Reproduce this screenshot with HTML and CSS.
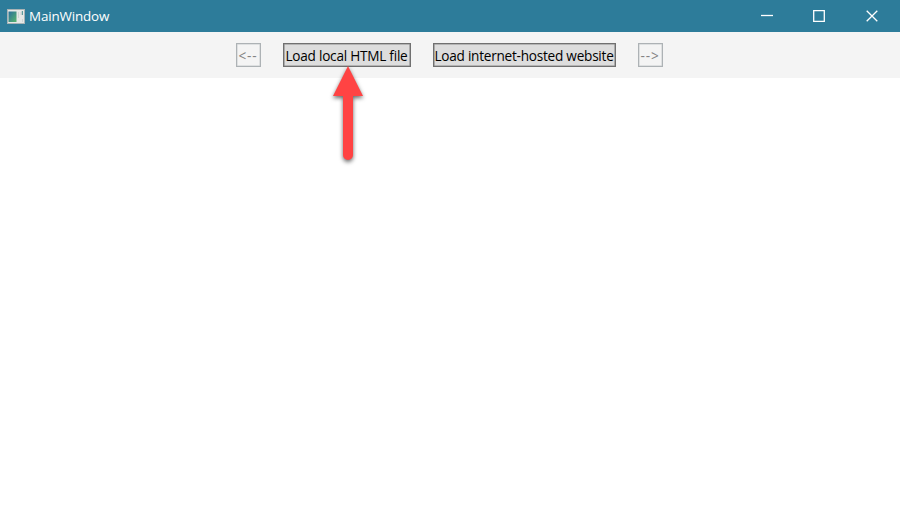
FILE: index.html
```html
<!DOCTYPE html>
<html lang="en">
<head>
<meta charset="utf-8">
<title>MainWindow</title>
<link rel="stylesheet" href="styles.css">
</head>
<body>
<div class="window">
  <header class="titlebar">
    <svg class="app-icon" viewBox="0 0 18 15">
      <defs><linearGradient id="pane" x1="0" y1="0" x2="1" y2="1"><stop offset="0" stop-color="#2b6f9c"/><stop offset="1" stop-color="#58b56c"/></linearGradient></defs>
      <rect x=".5" y=".5" width="17" height="14" fill="#e6e8e6" stroke="#a9b3b5"/>
      <rect x="1.5" y="2.5" width="8" height="10.5" fill="url(#pane)"/>
      <path d="M11.5 3v6M14 3v3M15.5 10v3" stroke="#d0d3d3"/>
      <rect x="14.8" y="2" width="1.2" height="4" fill="#5f9c9d"/>
    </svg>
    <span class="title">MainWindow</span>
    <div class="controls">
      <svg viewBox="0 0 12 12"><path d="M0 5.5h12"/></svg>
      <svg viewBox="0 0 12 12"><path d="M.7.7h10.6v10.6H.7z"/></svg>
      <svg viewBox="0 0 12 12"><path d="M.7.7l10.6 10.6M11.3.7L.7 11.3"/></svg>
    </div>
  </header>
  <nav class="toolbar">
    <button class="btn arrow-btn" disabled>&lt;--</button>
    <button class="btn local"><span>Load local HTML file</span></button>
    <button class="btn hosted"><span>Load internet-hosted website</span></button>
    <button class="btn arrow-btn" disabled>--&gt;</button>
  </nav>
  <svg class="pointer" viewBox="0 0 50 110">
    <path d="M25 6L40 36H30v59a5 5 0 0 1-10 0V36H10z"/>
  </svg>
</div>
</body>
</html>
```
FILE: styles.css
```css
* { box-sizing: border-box; }
body { margin: 0; background: #fff; font-family: "Open Sans", "Noto Sans", sans-serif; }
.window { position: relative; width: 900px; height: 506px; overflow: hidden; background: #fff; }
.titlebar { display: flex; align-items: center; height: 32px; padding: 0 22px 0 7px; background: #2d7c9a; color: #fff; }
.app-icon { width: 18px; height: 15px; margin-right: 4px; }
.title { font-size: 13.4px; line-height: 32px; letter-spacing: -.15px; }
.controls { display: flex; gap: 41px; margin-left: auto; }
.controls svg { width: 12px; height: 12px; fill: none; stroke: #fff; stroke-width: 1.3; }
.controls svg:first-child { margin-right: -1px; }
.toolbar { display: flex; justify-content: center; align-items: flex-start; gap: 22px; height: 46px; padding: 11px 2px 0 0; background: #f4f4f4; }
.btn { display: flex; align-items: center; justify-content: center; height: 24px; padding: 1px 0 0; border: 1px solid #707070; border-radius: 0; box-shadow: inset 0 0 0 .6px #8c8c8c; background: #ddd; color: #000; font: 13.6px/20px "Open Sans", "Noto Sans", sans-serif; letter-spacing: -.24px; white-space: nowrap; }
.local { width: 128px; }
.hosted { width: 183px; }
.arrow-btn { width: 25px; border-color: #adb2b5; box-shadow: inset 0 0 0 .5px #c8cccd; background: #f4f4f4; color: #838383; letter-spacing: .8px; }
.pointer { position: absolute; left: 323px; top: 60px; width: 50px; height: 110px; fill: #ff4343; filter: drop-shadow(0 2px 2px rgba(0, 0, 0, .6)); }
```
